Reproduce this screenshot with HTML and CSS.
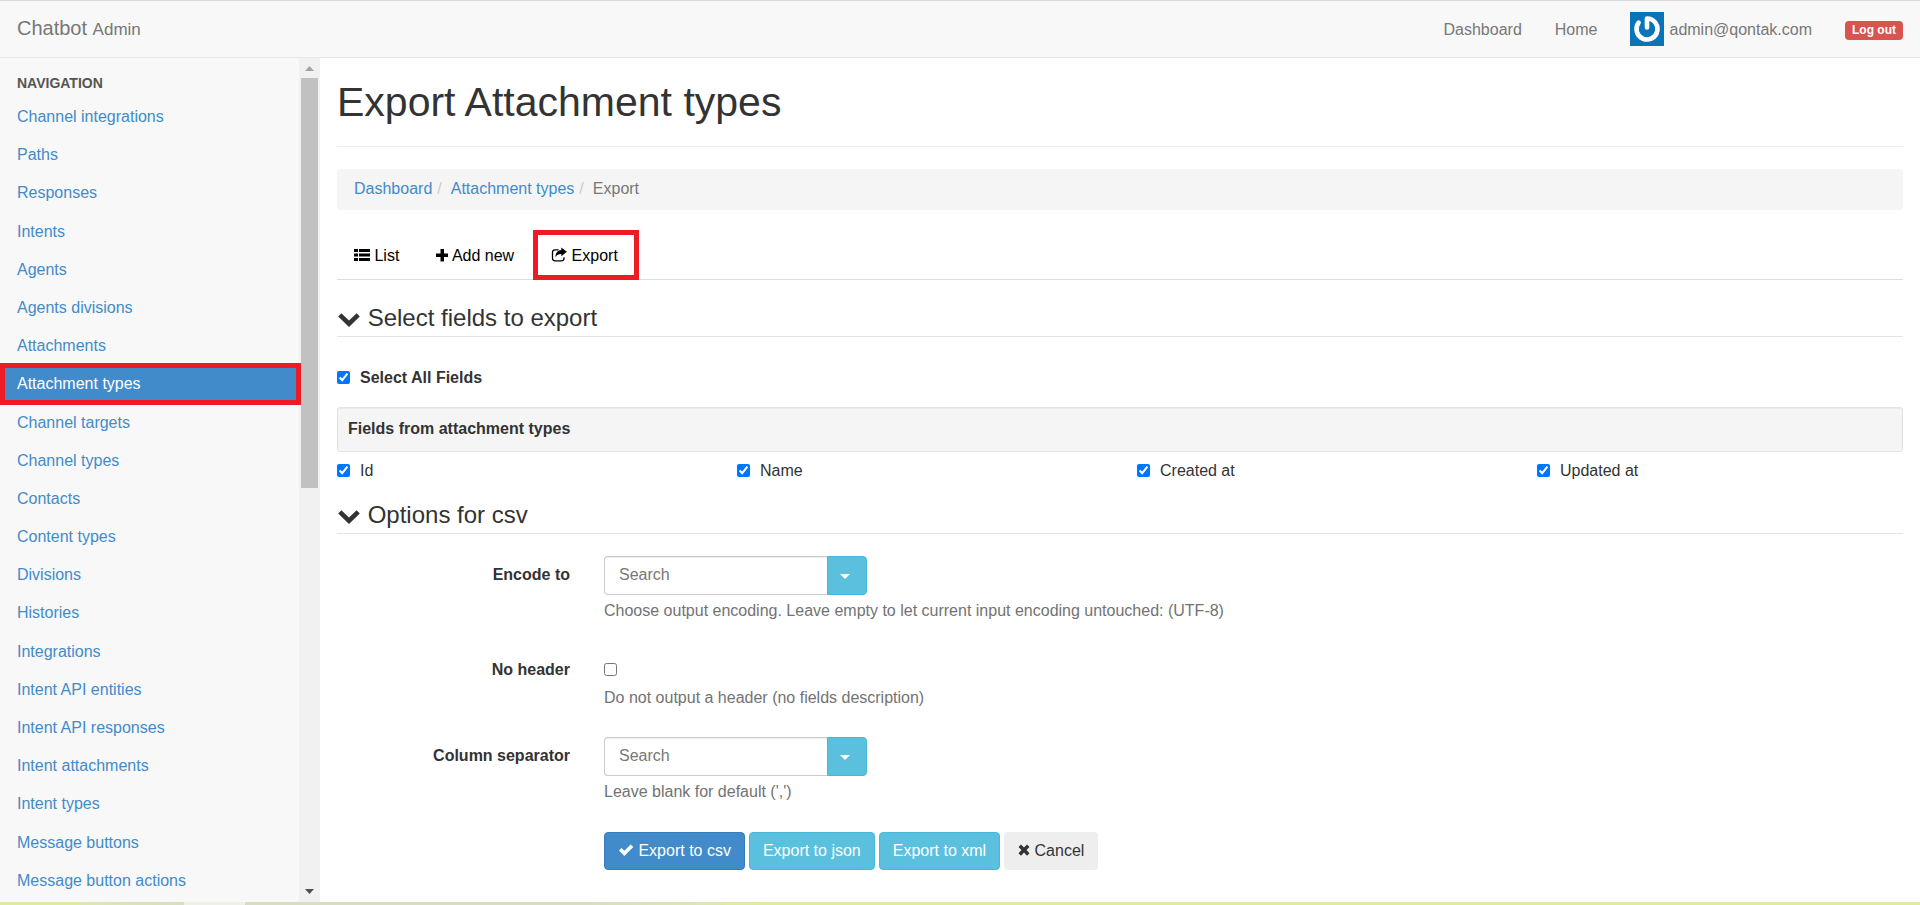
FILE: index.html
```html
<!DOCTYPE html>
<html lang="en">
<head>
<meta charset="utf-8">
<title>Export Attachment types | Chatbot Admin</title>
<link rel="stylesheet" href="styles.css">
</head>
<body>
<header class="navbar">
  <a class="brand" href="#">Chatbot <small>Admin</small></a>
  <nav class="navbar-links">
    <a href="#">Dashboard</a>
    <a href="#">Home</a>
    <a class="user" href="#">
      <svg class="avatar" viewBox="0 0 34 34" aria-hidden="true"><rect width="34" height="34" fill="#0a74b9"/><path d="M17 15.500V6.500A10.500 10.500 0 1 1 8.600 10.700" fill="none" stroke="#fff" stroke-width="4.600" stroke-linecap="round" stroke-linejoin="round"/></svg>
      <span>admin@qontak.com</span>
    </a>
    <a class="logout" href="#"><span class="badge">Log out</span></a>
  </nav>
</header>
<div class="layout">
  <aside class="sidebar">
    <nav class="side-nav">
      <h2 class="side-title">NAVIGATION</h2>
      <ul class="side-list">
        <li><a href="#">Channel integrations</a></li>
        <li><a href="#">Paths</a></li>
        <li><a href="#">Responses</a></li>
        <li><a href="#">Intents</a></li>
        <li><a href="#">Agents</a></li>
        <li><a href="#">Agents divisions</a></li>
        <li><a href="#">Attachments</a></li>
        <li><a class="active" href="#">Attachment types</a></li>
        <li><a href="#">Channel targets</a></li>
        <li><a href="#">Channel types</a></li>
        <li><a href="#">Contacts</a></li>
        <li><a href="#">Content types</a></li>
        <li><a href="#">Divisions</a></li>
        <li><a href="#">Histories</a></li>
        <li><a href="#">Integrations</a></li>
        <li><a href="#">Intent API entities</a></li>
        <li><a href="#">Intent API responses</a></li>
        <li><a href="#">Intent attachments</a></li>
        <li><a href="#">Intent types</a></li>
        <li><a href="#">Message buttons</a></li>
        <li><a href="#">Message button actions</a></li>
      </ul>
    </nav>
    <div class="scrollbar" aria-hidden="true">
      <svg class="arrow" viewBox="0 0 9 5"><path d="M0 5 4.500 0 9 5z" fill="#a3a3a3"/></svg>
      <div class="track"><div class="thumb"></div></div>
      <svg class="arrow" viewBox="0 0 9 5"><path d="M0 0H9L4.500 5z" fill="#505050"/></svg>
    </div>
  </aside>
  <main class="content">
    <h1 class="page-title">Export Attachment types</h1>
    <ol class="breadcrumb">
      <li><a href="#">Dashboard</a></li>
      <li><a href="#">Attachment types</a></li>
      <li>Export</li>
    </ol>
    <ul class="tabs">
      <li><a href="#"><svg class="icon" viewBox="0 0 16 16"><path d="M0 2h4v3H0zM5 2h11v3H5zM0 6.500h4v3H0zM5 6.500h11v3H5zM0 11h4v3H0zM5 11h11v3H5z"/></svg> List</a></li>
      <li><a href="#"><svg class="icon icon-plus" viewBox="0 0 12 16"><path d="M4.500 2h3.500v4.500H12V10H8v4.500H4.500V10H0V6.500h4.500z"/></svg> Add new</a></li>
      <li><a class="current" href="#"><svg class="icon" viewBox="0 0 16 16"><path d="M7.500 2.800H4Q1.500 2.800 1.500 5.300v6Q1.500 13.800 4 13.800h6.500Q13 13.800 13 11.300V10.200" fill="none" stroke="#000" stroke-width="1.300"/><path d="M10.300 0.500 15.900 4.800 10.300 9.200V6.900Q6.300 6.700 4.400 10.200 4.600 3.600 10.300 3.100z"/></svg> Export</a></li>
    </ul>
    <form class="export-form">
      <fieldset>
        <legend><svg class="chevron" viewBox="0 0 24 24"><path d="M4.400 6.200 12 13.600 19.600 6.200 22.800 9.400 12 20 1.200 9.400z"/></svg> Select fields to export</legend>
        <label class="check check-all"><input type="checkbox" checked> Select All Fields</label>
        <div class="well">Fields from attachment types</div>
        <div class="field-grid">
          <label class="check"><input type="checkbox" checked> Id</label>
          <label class="check"><input type="checkbox" checked> Name</label>
          <label class="check"><input type="checkbox" checked> Created at</label>
          <label class="check"><input type="checkbox" checked> Updated at</label>
        </div>
      </fieldset>
      <fieldset>
        <legend><svg class="chevron" viewBox="0 0 24 24"><path d="M4.400 6.200 12 13.600 19.600 6.200 22.800 9.400 12 20 1.200 9.400z"/></svg> Options for csv</legend>
        <div class="form-row">
          <label class="row-label" for="encode">Encode to</label>
          <div class="row-field">
            <div class="combo">
              <input id="encode" type="text" placeholder="Search">
              <button type="button" aria-label="Show encodings"><span class="caret"></span></button>
            </div>
            <p class="help">Choose output encoding. Leave empty to let current input encoding untouched: (UTF-8)</p>
          </div>
        </div>
        <div class="form-row form-row-check">
          <label class="row-label" for="no-header">No header</label>
          <div class="row-field">
            <div class="check-holder"><input id="no-header" type="checkbox"></div>
            <p class="help">Do not output a header (no fields description)</p>
          </div>
        </div>
        <div class="form-row">
          <label class="row-label" for="separator">Column separator</label>
          <div class="row-field">
            <div class="combo">
              <input id="separator" type="text" placeholder="Search">
              <button type="button" aria-label="Show separators"><span class="caret"></span></button>
            </div>
            <p class="help">Leave blank for default (',')</p>
          </div>
        </div>
      </fieldset>
      <div class="actions">
        <button class="btn btn-primary" type="submit"><svg class="icon" viewBox="0 0 16 16"><path d="M1 8.500 3.500 6 6.300 8.800 12.700 2.400 15.300 5 6.300 14z"/></svg> Export to csv</button>
        <button class="btn btn-info" type="submit">Export to json</button>
        <button class="btn btn-info" type="submit">Export to xml</button>
        <button class="btn btn-cancel" type="button"><svg class="icon icon-remove" viewBox="0 0 12 16"><path d="M0.500 5 3 2.500 6 5.500 9 2.500 11.500 5 8.500 8 11.500 11.200 9 13.800 6 10.600 3 13.800 0.500 11.200 3.500 8z"/></svg> Cancel</button>
      </div>
    </form>
  </main>
</div>
<div class="edge"></div>
</body>
</html>
```

FILE: styles.css
```css
* { box-sizing: border-box; }

body {
  margin: 0;
  min-height: 100vh;
  display: flex;
  flex-direction: column;
  font-family: "Liberation Sans", Arial, Helvetica, sans-serif;
  font-size: 16px;
  line-height: 23px;
  color: #333;
  background: #fff;
}

a { color: #428bca; text-decoration: none; }
ul, ol { list-style: none; margin: 0; padding: 0; }
button, input { font: inherit; }
input[type="checkbox"] { width: 13px; height: 13px; margin: 0; }

/* Top bar */
.navbar {
  display: flex;
  justify-content: space-between;
  align-items: center;
  height: 58px;
  padding: 0 17px;
  background: #f8f8f8;
  border-top: 1px solid #dadada;
  border-bottom: 1px solid #e7e7e7;
}
.navbar a { color: #777; }
.brand { font-size: 20px; }
.brand small { font-size: 17px; }
.navbar-links { display: flex; align-items: center; gap: 33px; }
.user { display: flex; align-items: center; gap: 5px; }
.avatar { width: 34px; height: 34px; }
.logout { padding-top: 3px; display: flex; }
.badge {
  padding: 0 7px;
  font-size: 12px;
  line-height: 19px;
  font-weight: bold;
  color: #fff;
  background: #d9534f;
  border-radius: 4px;
}

/* Page columns */
.layout { flex: 1; display: flex; }
.sidebar { display: flex; width: 320px; flex: none; background: #f8f8f8; }
.side-nav { flex: 1; }
.side-title {
  margin: 0;
  padding: 14px 17px 2px;
  font-size: 14px;
  line-height: 23px;
  color: #555;
}
.side-list a {
  display: block;
  position: relative;
  margin-top: 1px;
  padding: 7px 17px;
  line-height: 1.45;
}
.side-list .active { color: #fff; background: #428bca; }
.side-list .active::after {
  content: "";
  position: absolute;
  inset: -2px -2px -2px 0;
  border: 5px solid #ed1c24;
}

.scrollbar {
  display: flex;
  flex-direction: column;
  align-items: center;
  width: 21px;
  padding: 8px 2px;
  background: #f1f1f1;
}
.arrow { width: 9px; height: 5px; flex: none; }
.track { flex: 1; align-self: stretch; padding: 7px 0; }
.thumb { height: 51%; background: #c1c1c1; }

/* Main column */
.content { flex: 1; min-width: 0; padding: 0 17px; }
.page-title {
  margin: 0 0 22px;
  padding: 21px 0 20px;
  font-size: 41px;
  line-height: 47px;
  font-weight: normal;
  border-bottom: 1px solid #eee;
}
.breadcrumb {
  display: flex;
  padding: 8px 17px 10px;
  background: #f5f5f5;
  border-radius: 4px;
  color: #777;
}
.breadcrumb li + li::before { content: "/"; padding: 0 9px 0 5px; color: #ccc; }

.tabs { display: flex; margin-top: 20px; border-bottom: 1px solid #ddd; }
.tabs a {
  display: block;
  position: relative;
  padding: 14px 17px 12px;
  margin-right: 3px;
  color: #000;
}
.tabs .current::after {
  content: "";
  position: absolute;
  inset: 0 -4px -1px -1px;
  border: 5px solid #ed1c24;
}
.icon { width: 16px; height: 16px; vertical-align: -2px; fill: currentColor; }
.icon-plus, .icon-remove { width: 12px; }

fieldset { margin: 0; padding: 0; border: 0; min-width: 0; }
legend {
  width: 100%;
  padding: 1px 0;
  font-size: 24px;
  line-height: 35px;
  border-bottom: 1px solid #e5e5e5;
}
.chevron { width: 24px; height: 24px; vertical-align: -5px; fill: currentColor; }
.export-form { display: grid; gap: 14px; padding-top: 19px; }

.check { display: flex; align-items: center; gap: 10px; }
.check-all { margin: 29px 0 18px; font-weight: bold; }
.well {
  padding: 9px 10px 11px;
  margin-bottom: 7px;
  font-weight: bold;
  background: #f5f5f5;
  border: 1px solid #e3e3e3;
  border-radius: 3px;
  box-shadow: inset 0 1px 1px rgba(0, 0, 0, .05);
}
.field-grid {
  display: grid;
  grid-template-columns: repeat(4, 1fr);
  column-gap: 34px;
}

.form-row {
  display: grid;
  grid-template-columns: 233px 1fr;
  column-gap: 34px;
  margin-top: 22px;
}
.row-label { padding-top: 7px; font-weight: bold; text-align: right; }
.form-row-check .row-label { padding-top: 4px; }
.combo { display: flex; width: 263px; height: 39px; }
.combo input {
  flex: 1;
  min-width: 0;
  padding: 0 14px 2px;
  border: 1px solid #ccc;
  border-right: 0;
  border-radius: 4px 0 0 4px;
  box-shadow: inset 0 1px 1px rgba(0, 0, 0, .075);
}
.combo input::placeholder { color: #777; }
.combo button {
  display: flex;
  align-items: center;
  width: 40px;
  padding: 2px 12px 0;
  background: #5bc0de;
  border: 1px solid #46b8da;
  border-radius: 0 4px 4px 0;
}
.caret {
  border-top: 5px solid #fff;
  border-left: 5px solid transparent;
  border-right: 5px solid transparent;
}
.help { margin: 4px 0 14px; color: #737373; }
.check-holder { display: flex; align-items: center; padding: 9px 0 6px; }
.form-row + .form-row { margin-top: 18px; }
.form-row-check + .form-row { margin-top: 14px; }

.actions { display: flex; flex-wrap: wrap; gap: 4px; padding: 1px 0 0 267px; }
.btn {
  padding: 7px 13px;
  line-height: 22px;
  border: 1px solid transparent;
  border-radius: 4px;
}
.btn-primary { color: #fff; background: #428bca; border-color: #357ebd; }
.btn-info { color: #fff; background: #5bc0de; border-color: #46b8da; }
.btn-cancel { color: #333; background: #eee; }

/* Coloured strip along the bottom edge */
.edge {
  height: 3px;
  background: linear-gradient(90deg, #e2e9a6 0, #e2e9a6 60px, #d7dfbf 184px, #eef1e4 184px, #eef1e4 245px, #d7dfbf 245px, #d7dfbf 580px, #e2e9a6 760px);
}
```
